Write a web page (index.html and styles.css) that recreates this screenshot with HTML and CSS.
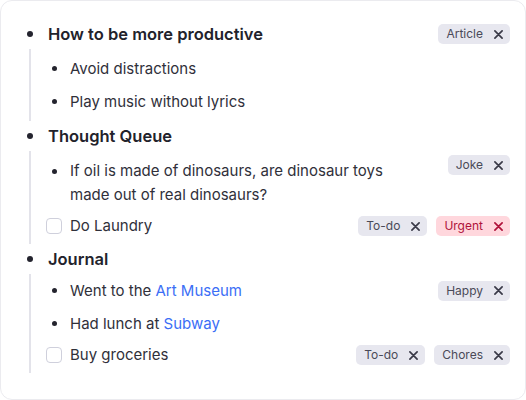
FILE: index.html
```html
<!DOCTYPE html>
<html>
<head>
<meta charset="utf-8">
<link rel="stylesheet" href="styles.css">
</head>
<body>
<div class="card">
  <div class="row heading">
    <span class="marker"><span class="dot"></span></span>
    <span class="text">How to be more productive</span>
    <span class="tags"><span class="tag">Article<svg class="x" viewBox="0 0 8 8"><path d="M0.8 0.8L7.2 7.2M7.2 0.8L0.8 7.2"/></svg></span></span>
  </div>
  <div class="children">
    <div class="row item">
      <span class="marker"><span class="dot"></span></span>
      <span class="text">Avoid distractions</span>
    </div>
    <div class="row item">
      <span class="marker"><span class="dot"></span></span>
      <span class="text">Play music without lyrics</span>
    </div>
  </div>

  <div class="row heading">
    <span class="marker"><span class="dot"></span></span>
    <span class="text">Thought Queue</span>
  </div>
  <div class="children">
    <div class="row item multi">
      <span class="marker"><span class="dot"></span></span>
      <span class="text wrap">If oil is made of dinosaurs, are dinosaur toys made out of real dinosaurs?</span>
      <span class="tags"><span class="tag">Joke<svg class="x" viewBox="0 0 8 8"><path d="M0.8 0.8L7.2 7.2M7.2 0.8L0.8 7.2"/></svg></span></span>
    </div>
    <div class="row check">
      <span class="marker"><span class="box"></span></span>
      <span class="text">Do Laundry</span>
      <span class="tags">
        <span class="tag">To-do<svg class="x" viewBox="0 0 8 8"><path d="M0.8 0.8L7.2 7.2M7.2 0.8L0.8 7.2"/></svg></span>
        <span class="tag urgent">Urgent<svg class="x" viewBox="0 0 8 8"><path d="M0.8 0.8L7.2 7.2M7.2 0.8L0.8 7.2"/></svg></span>
      </span>
    </div>
  </div>

  <div class="row heading">
    <span class="marker"><span class="dot"></span></span>
    <span class="text">Journal</span>
  </div>
  <div class="children tight">
    <div class="row item">
      <span class="marker"><span class="dot"></span></span>
      <span class="text">Went to the <a class="link" href="#">Art Museum</a></span>
      <span class="tags"><span class="tag">Happy<svg class="x" viewBox="0 0 8 8"><path d="M0.8 0.8L7.2 7.2M7.2 0.8L0.8 7.2"/></svg></span></span>
    </div>
    <div class="row item">
      <span class="marker"><span class="dot"></span></span>
      <span class="text">Had lunch at <a class="link" href="#">Subway</a></span>
    </div>
    <div class="row check">
      <span class="marker"><span class="box"></span></span>
      <span class="text">Buy groceries</span>
      <span class="tags">
        <span class="tag">To-do<svg class="x" viewBox="0 0 8 8"><path d="M0.8 0.8L7.2 7.2M7.2 0.8L0.8 7.2"/></svg></span>
        <span class="tag">Chores<svg class="x" viewBox="0 0 8 8"><path d="M0.8 0.8L7.2 7.2M7.2 0.8L0.8 7.2"/></svg></span>
      </span>
    </div>
  </div>
</div>
</body>
</html>
```
FILE: styles.css
```css
html, body {
  margin: 0;
  padding: 0;
  background: #ffffff;
}
body {
  font-family: Inter, "Noto Sans", sans-serif;
  color: #30303a;
}
.card {
  box-sizing: border-box;
  width: 526px;
  height: 400px;
  border: 1px solid #ebebef;
  border-radius: 12px;
  background: #fff;
  padding: 18px 15px 0 21px;
}
.row {
  display: flex;
  align-items: center;
}
.marker {
  width: 16px;
  flex: none;
  display: flex;
  justify-content: center;
  align-items: center;
}
.dot {
  width: 5px;
  height: 5px;
  border-radius: 50%;
  background: #24242e;
}
.heading {
  height: 30px;
  gap: 10px;
}
.heading .text {
  font-size: 16.5px;
  font-weight: 600;
  color: #22222b;
  flex: 1;
}
.heading .dot {
  width: 6px;
  height: 6px;
}
.children {
  margin-left: 7px;
  border-left: 2px solid #e3e3ea;
  padding: 3px 0 3px 15px;
}
.children.tight {
  padding-top: 0;
}
.item, .check {
  gap: 8px;
  font-size: 15px;
  line-height: 24px;
}
.item {
  height: 33px;
}
.check {
  height: 30px;
}
.multi {
  height: auto;
  padding: 5px 0 4px;
  align-items: flex-start;
}
.multi .marker {
  height: 24px;
}
.multi .tags {
  margin-top: -4px;
}
.text {
  flex: 1;
  white-space: nowrap;
}
.text.wrap {
  white-space: normal;
  flex: none;
  width: 336px;
  margin-right: auto;
}
.box {
  box-sizing: border-box;
  width: 16px;
  height: 16px;
  border: 1.5px solid #cfd0dc;
  border-radius: 4px;
  background: #fff;
}
.link {
  color: #3b6ef6;
  text-decoration: none;
}
.tags {
  display: flex;
  gap: 9px;
  flex: none;
}
.tag {
  display: inline-flex;
  align-items: center;
  height: 20px;
  padding: 0 7px 0 8px;
  border-radius: 5px;
  background: #e7e7ef;
  color: #4a4a58;
  font-size: 12px;
  line-height: 20px;
  gap: 11px;
}
.tag .x {
  width: 9px;
  height: 9px;
  fill: none;
  stroke: #3a3a48;
  stroke-width: 1.5;
  stroke-linecap: round;
}
.tag.urgent {
  background: #ffd7dd;
  color: #b0123a;
}
.tag.urgent .x {
  stroke: #b0123a;
}
```
